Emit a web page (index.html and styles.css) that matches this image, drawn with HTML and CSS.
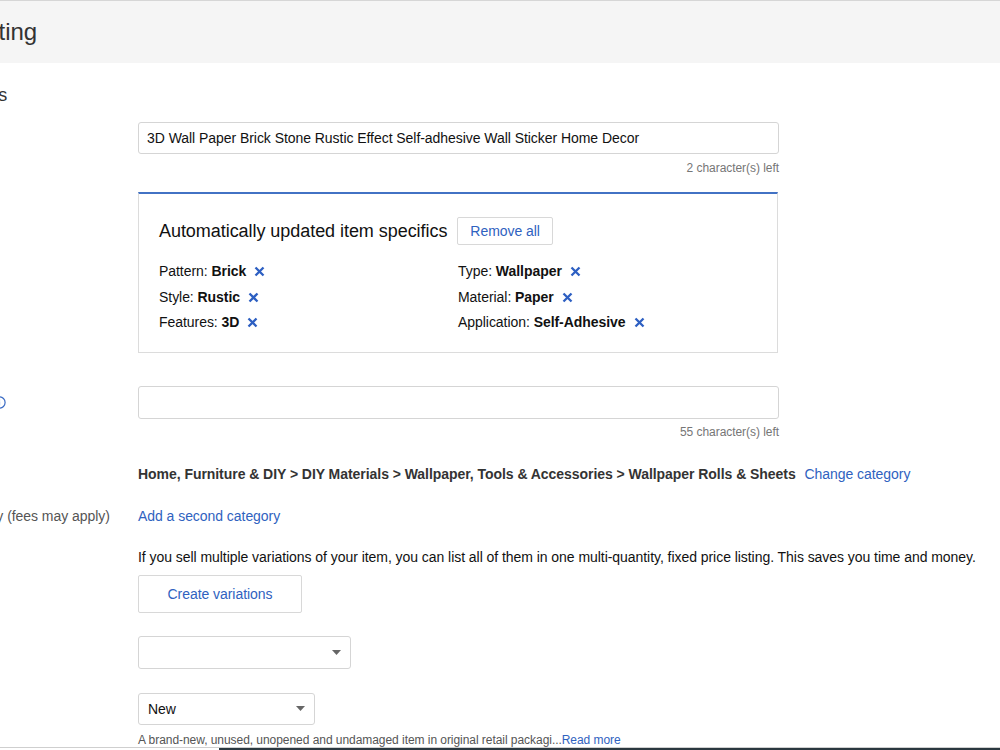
FILE: index.html
```html
<!DOCTYPE html>
<html lang="en">

<head>
  <meta charset="UTF-8" />
  <meta name="viewport" content="width=device-width, initial-scale=1.0">
  <title>Complete your listing</title>
  <link rel="stylesheet" href="styles.css">
</head>

<body>
  <div class="page-header">
    <h1>Complete your listing</h1>
  </div>

  <main class="page">
    <h2 class="section-title">Listing details</h2>

    <!-- Title -->
    <div class="row">
      <label class="row-label">Title</label>
      <div class="row-field">
        <input class="text-input" type="text" value="3D Wall Paper Brick Stone Rustic Effect Self-adhesive Wall Sticker Home Decor">
        <div class="char-count">2 character(s) left</div>

        <div class="specifics">
          <div class="specifics-head">
            <h3>Automatically updated item specifics</h3>
            <button class="btn btn-small">Remove all</button>
          </div>
          <div class="spec-grid">
            <div class="spec-item">Pattern:&nbsp;<b>Brick</b>
              <svg class="remove-x" width="11" height="11" viewBox="0 0 11 11"><path d="M1.5 1.5 L9.5 9.5 M9.5 1.5 L1.5 9.5" /></svg>
            </div>
            <div class="spec-item">Type:&nbsp;<b>Wallpaper</b>
              <svg class="remove-x" width="11" height="11" viewBox="0 0 11 11"><path d="M1.5 1.5 L9.5 9.5 M9.5 1.5 L1.5 9.5" /></svg>
            </div>
            <div class="spec-item">Style:&nbsp;<b>Rustic</b>
              <svg class="remove-x" width="11" height="11" viewBox="0 0 11 11"><path d="M1.5 1.5 L9.5 9.5 M9.5 1.5 L1.5 9.5" /></svg>
            </div>
            <div class="spec-item">Material:&nbsp;<b>Paper</b>
              <svg class="remove-x" width="11" height="11" viewBox="0 0 11 11"><path d="M1.5 1.5 L9.5 9.5 M9.5 1.5 L1.5 9.5" /></svg>
            </div>
            <div class="spec-item">Features:&nbsp;<b>3D</b>
              <svg class="remove-x" width="11" height="11" viewBox="0 0 11 11"><path d="M1.5 1.5 L9.5 9.5 M9.5 1.5 L1.5 9.5" /></svg>
            </div>
            <div class="spec-item">Application:&nbsp;<b>Self-Adhesive</b>
              <svg class="remove-x" width="11" height="11" viewBox="0 0 11 11"><path d="M1.5 1.5 L9.5 9.5 M9.5 1.5 L1.5 9.5" /></svg>
            </div>
          </div>
        </div>
      </div>
    </div>

    <!-- Subtitle -->
    <div class="row row-subtitle">
      <label class="row-label label-centered">Subtitle
        <svg class="info-icon" width="13" height="13" viewBox="0 0 13 13">
          <circle cx="6.5" cy="6.5" r="5.6" />
          <path d="M6.5 5.6 V9.6 M6.5 3.4 V4.4" />
        </svg>
      </label>
      <div class="row-field">
        <input class="text-input text-input-tall" type="text" value="">
        <div class="char-count count-tight">55 character(s) left</div>
      </div>
    </div>

    <!-- Category -->
    <div class="row row-category">
      <label class="row-label">Category</label>
      <div class="row-field">
        <span class="category-path">Home, Furniture &amp; DIY &gt; DIY Materials &gt; Wallpaper, Tools &amp; Accessories &gt; Wallpaper Rolls &amp; Sheets</span>
        <a href="#" class="link link-change">Change category</a>
      </div>
    </div>

    <div class="row row-second">
      <label class="row-label">Second category (fees may apply)</label>
      <div class="row-field">
        <a href="#" class="link">Add a second category</a>
      </div>
    </div>

    <!-- Variations -->
    <div class="row row-variations">
      <label class="row-label">Variations</label>
      <div class="row-field">
        <p class="hint">If you sell multiple variations of your item, you can list all of them in one multi-quantity, fixed price listing. This saves you time and money.</p>
        <button class="btn btn-large">Create variations</button>
      </div>
    </div>

    <div class="row row-select">
      <label class="row-label">Size</label>
      <div class="row-field">
        <div class="select select-wide">
          <span></span>
          <svg class="caret" width="9" height="5" viewBox="0 0 9 5"><path d="M0 0 H9 L4.5 5 Z" /></svg>
        </div>
      </div>
    </div>

    <!-- Condition -->
    <div class="row row-condition">
      <label class="row-label">Condition</label>
      <div class="row-field">
        <div class="select select-narrow">
          <span>New</span>
          <svg class="caret" width="9" height="5" viewBox="0 0 9 5"><path d="M0 0 H9 L4.5 5 Z" /></svg>
        </div>
        <div class="condition-desc">A brand-new, unused, unopened and undamaged item in original retail packagi...<a href="#" class="link">Read more</a></div>
      </div>
    </div>
  </main>

  <div class="screen-edge"></div>
</body>

</html>
```

FILE: styles.css
```css
body {
  margin: 0;
  font-family: "Liberation Sans", Arial, sans-serif;
  letter-spacing: -0.05px;
  color: #111;
  background: #fff;
  overflow: hidden;
}

.page-header {
  border-top: 1px solid #d6d6d6;
  background: #f5f5f5;
  height: 62px;
  display: flex;
  align-items: center;
}

.page-header h1 {
  margin: 0 0 0 -186px;
  font-size: 24px;
  font-weight: normal;
  color: #333;
}

/* the page is scrolled sideways, so labels run off the left edge */
.page {
  margin-left: -101px;
}

.section-title {
  margin: 20px 0 15px;
  font-size: 18px;
  line-height: 24px;
  font-weight: normal;
  color: #333;
}

.row {
  display: grid;
  grid-template-columns: 239px 1fr;
}

.row-label {
  font-size: 14px;
  line-height: 20px;
  color: #555;
}

.label-centered {
  display: flex;
  align-items: center;
  height: 33px;
}

.info-icon {
  margin-left: 48px;
  fill: none;
  stroke: #3a6bc4;
  stroke-width: 1.2;
}

.text-input {
  display: block;
  width: 641px;
  height: 32px;
  box-sizing: border-box;
  padding: 0 8px;
  border: 1px solid #d5d5d5;
  border-radius: 3px;
  font: 14px "Liberation Sans", Arial, sans-serif;
  letter-spacing: -0.05px;
  color: #111;
  outline: none;
}

.text-input-tall {
  height: 33px;
}

.char-count {
  width: 641px;
  margin-top: 6px;
  text-align: right;
  font-size: 12px;
  line-height: 16px;
  color: #767676;
}

.count-tight {
  margin-top: 5px;
}

.specifics {
  width: 640px;
  box-sizing: border-box;
  margin-top: 16px;
  padding: 23px 20px 16px;
  border: 1px solid #dcdcdc;
  border-top: 2px solid #4272c4;
}

.specifics-head {
  display: flex;
  align-items: center;
  gap: 10px;
  height: 28px;
}

.specifics-head h3 {
  margin: 0;
  font-size: 18px;
  font-weight: normal;
  color: #111;
}

.btn {
  background: #fff;
  border: 1px solid #d8d8d8;
  border-radius: 2px;
  color: #2f62c0;
  font: 14px "Liberation Sans", Arial, sans-serif;
  letter-spacing: -0.05px;
  cursor: pointer;
}

.btn-small {
  height: 28px;
  padding: 0 12px;
}

.btn-large {
  display: block;
  width: 164px;
  height: 38px;
  margin-top: 8px;
}

.spec-grid {
  display: grid;
  grid-template-columns: 299px 1fr;
  margin-top: 14px;
  font-size: 14px;
  line-height: 25.5px;
}

.spec-item {
  display: flex;
  align-items: center;
}

.remove-x {
  margin-left: 8px;
  fill: none;
  stroke: #2d5fc2;
  stroke-width: 2.3;
}

.row-subtitle {
  margin-top: 33px;
}

.row-category {
  margin-top: 24px;
  font-size: 14px;
  line-height: 20px;
}

.category-path {
  font-weight: bold;
  color: #333;
}

.link {
  color: #2f62c0;
  text-decoration: none;
}

.link-change {
  margin-left: 5px;
}

.row-second {
  margin-top: 22px;
  font-size: 14px;
  line-height: 20px;
}

.row-variations {
  margin-top: 21px;
}

.hint {
  margin: 0;
  font-size: 14px;
  line-height: 20px;
  color: #111;
  white-space: nowrap;
}

.row-select {
  margin-top: 23px;
}

.row-condition {
  margin-top: 24px;
}

.select {
  display: flex;
  align-items: center;
  justify-content: space-between;
  box-sizing: border-box;
  padding: 0 9px 0 9px;
  border: 1px solid #d5d5d5;
  border-radius: 3px;
  font-size: 14px;
  color: #111;
}

.select-wide {
  width: 213px;
  height: 33px;
}

.select-narrow {
  width: 177px;
  height: 32px;
}

.caret {
  fill: #666;
}

.condition-desc {
  margin-top: 7px;
  font-size: 12px;
  line-height: 16px;
  color: #555;
  white-space: nowrap;
}

/* edge of the window below the page */
.screen-edge {
  position: fixed;
  left: 0;
  right: 0;
  bottom: 0;
  height: 2px;
  border-top: 1px solid #cfcfcf;
  background: linear-gradient(to right, #fff 219px, #2b3840 219px);
}
```
